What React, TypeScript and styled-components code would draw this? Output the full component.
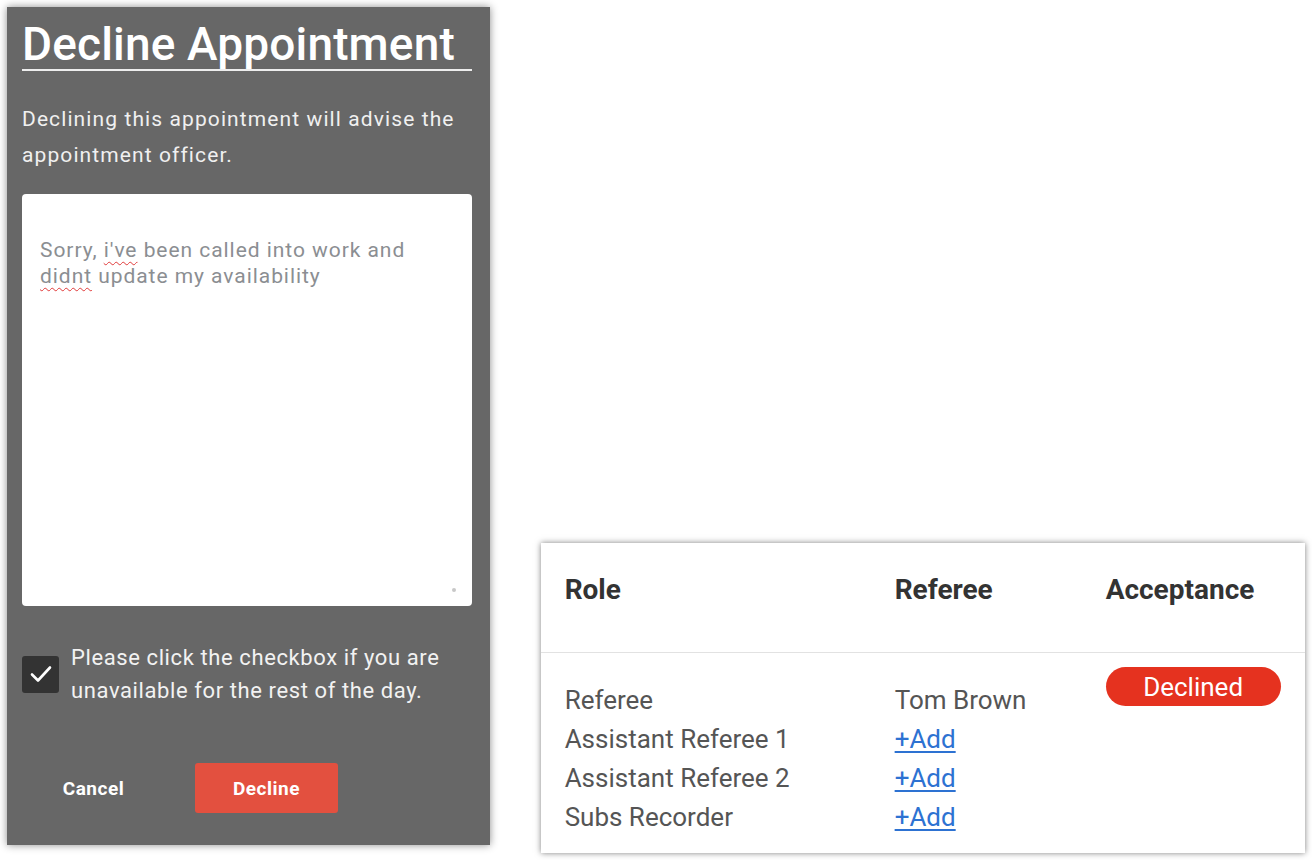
import { createGlobalStyle, styled } from "styled-components";

const GlobalStyle = createGlobalStyle`
  html, body {
    margin: 0;
    padding: 0;
    background: #ffffff;
    font-family: Roboto, "Liberation Sans", Arial, sans-serif;
  }
  * {
    box-sizing: border-box;
  }
`;

const Page = styled.div`
  display: flex;
  align-items: flex-start;
  width: 1312px;
  height: 860px;
  padding: 7px;
  gap: 51px;
  overflow: hidden;
`;

const Dialog = styled.div`
  display: flex;
  flex-direction: column;
  width: 483px;
  height: 838px;
  padding: 14px 18px 32px 15px;
  background: #676767;
  color: #f4f4f4;
  box-shadow: 0 0 8px rgba(0, 0, 0, 0.45);
`;

const Title = styled.h1`
  margin: 0;
  padding-bottom: 2px;
  font-size: 46px;
  line-height: 46px;
  font-weight: 500;
  letter-spacing: 0.15px;
  color: #ffffff;
  border-bottom: 2px solid #ededed;
`;

const Intro = styled.p`
  margin: 30px 0 0;
  font-size: 21px;
  line-height: 36px;
  letter-spacing: 1.1px;
  color: #f0f0f0;
`;

const NoteBox = styled.div`
  position: relative;
  margin-top: 21px;
  height: 412px;
  padding: 43px 18px;
  background: #ffffff;
  border-radius: 4px;
  font-size: 21px;
  line-height: 26px;
  letter-spacing: 0.95px;
  color: #8b8e92;
`;

const Misspelt = styled.span`
  text-decoration: underline wavy #e03a3a;
  text-decoration-thickness: 1px;
  text-underline-offset: 4px;
`;

const Grip = styled.span`
  position: absolute;
  right: 16px;
  bottom: 14px;
  width: 4px;
  height: 4px;
  border-radius: 50%;
  background: #c8c8c8;
`;

const CheckRow = styled.label`
  display: flex;
  align-items: center;
  gap: 12px;
  margin-top: 35px;
`;

const CheckBox = styled.span`
  display: flex;
  align-items: center;
  justify-content: center;
  flex: none;
  width: 37px;
  height: 37px;
  border-radius: 3px;
  background: #333333;
`;

const CheckText = styled.span`
  font-size: 22px;
  line-height: 33px;
  letter-spacing: 0.6px;
  color: #f2f2f2;
`;

const Actions = styled.div`
  display: flex;
  gap: 30px;
  margin-top: 56px;
`;

const Button = styled.button<{ $primary?: boolean }>`
  width: 143px;
  height: 50px;
  border: none;
  border-radius: 3px;
  background: ${(p) => (p.$primary ? "#e3503f" : "transparent")};
  color: #ffffff;
  font-family: Roboto, "Liberation Sans", Arial, sans-serif;
  font-size: 19px;
  font-weight: 700;
  letter-spacing: 0.5px;
  cursor: pointer;
`;

const Card = styled.div`
  align-self: flex-end;
  width: 765px;
  height: 310px;
  background: #ffffff;
  box-shadow: 0 0 6px rgba(0, 0, 0, 0.5);
`;

const Grid = styled.div`
  display: grid;
  grid-template-columns: 330px 211px 1fr;
  padding-left: 24px;
`;

const HeadCell = styled.div`
  height: 109px;
  padding-top: 31px;
  font-size: 28px;
  line-height: 32px;
  font-weight: 700;
  color: #333333;
`;

const Divider = styled.div`
  height: 1px;
  background: #e2e2e2;
`;

const Body = styled(Grid)`
  grid-auto-rows: 39px;
  padding-top: 14px;
  grid-template-rows: 53px;
`;

const Cell = styled.div`
  display: flex;
  align-items: flex-end;
  font-size: 26px;
  line-height: 39px;
  color: #555555;
`;

const AddLink = styled.a`
  color: #2d72d2;
  text-decoration: underline;
  text-underline-offset: 3px;
  cursor: pointer;
`;

const StatusCell = styled.div`
  display: flex;
  align-items: flex-start;
`;

const Pill = styled.span`
  display: inline-flex;
  align-items: center;
  justify-content: center;
  width: 175px;
  height: 39px;
  border-radius: 20px;
  background: #e5321f;
  color: #ffffff;
  font-size: 26px;
`;

const rows = [
  { role: "Referee", referee: "Tom Brown" },
  { role: "Assistant Referee 1", referee: null },
  { role: "Assistant Referee 2", referee: null },
  { role: "Subs Recorder", referee: null },
];

export default function App() {
  return (
    <>
      <GlobalStyle />
      <Page>
        <Dialog>
          <Title>Decline Appointment</Title>
          <Intro>
            Declining this appointment will advise the appointment officer.
          </Intro>
          <NoteBox>
            Sorry, <Misspelt>i've</Misspelt> been called into work and{" "}
            <Misspelt>didnt</Misspelt> update my availability
            <Grip />
          </NoteBox>
          <CheckRow>
            <CheckBox>
              <svg width="26" height="26" viewBox="0 0 26 26" fill="none">
                <path
                  d="M4 13.5l6 6L22 6.5"
                  stroke="#ffffff"
                  strokeWidth="2.6"
                  strokeLinecap="round"
                  strokeLinejoin="round"
                />
              </svg>
            </CheckBox>
            <CheckText>
              Please click the checkbox if you are unavailable for the rest of
              the day.
            </CheckText>
          </CheckRow>
          <Actions>
            <Button>Cancel</Button>
            <Button $primary>Decline</Button>
          </Actions>
        </Dialog>

        <Card>
          <Grid>
            <HeadCell>Role</HeadCell>
            <HeadCell>Referee</HeadCell>
            <HeadCell>Acceptance</HeadCell>
          </Grid>
          <Divider />
          <Body>
            {rows.map((r, i) => (
              <>
                <Cell key={`r${i}`}>{r.role}</Cell>
                <Cell key={`f${i}`}>
                  {r.referee ? r.referee : <AddLink>+Add</AddLink>}
                </Cell>
                <StatusCell key={`s${i}`}>
                  {i === 0 && <Pill>Declined</Pill>}
                </StatusCell>
              </>
            ))}
          </Body>
        </Card>
      </Page>
    </>
  );
}
